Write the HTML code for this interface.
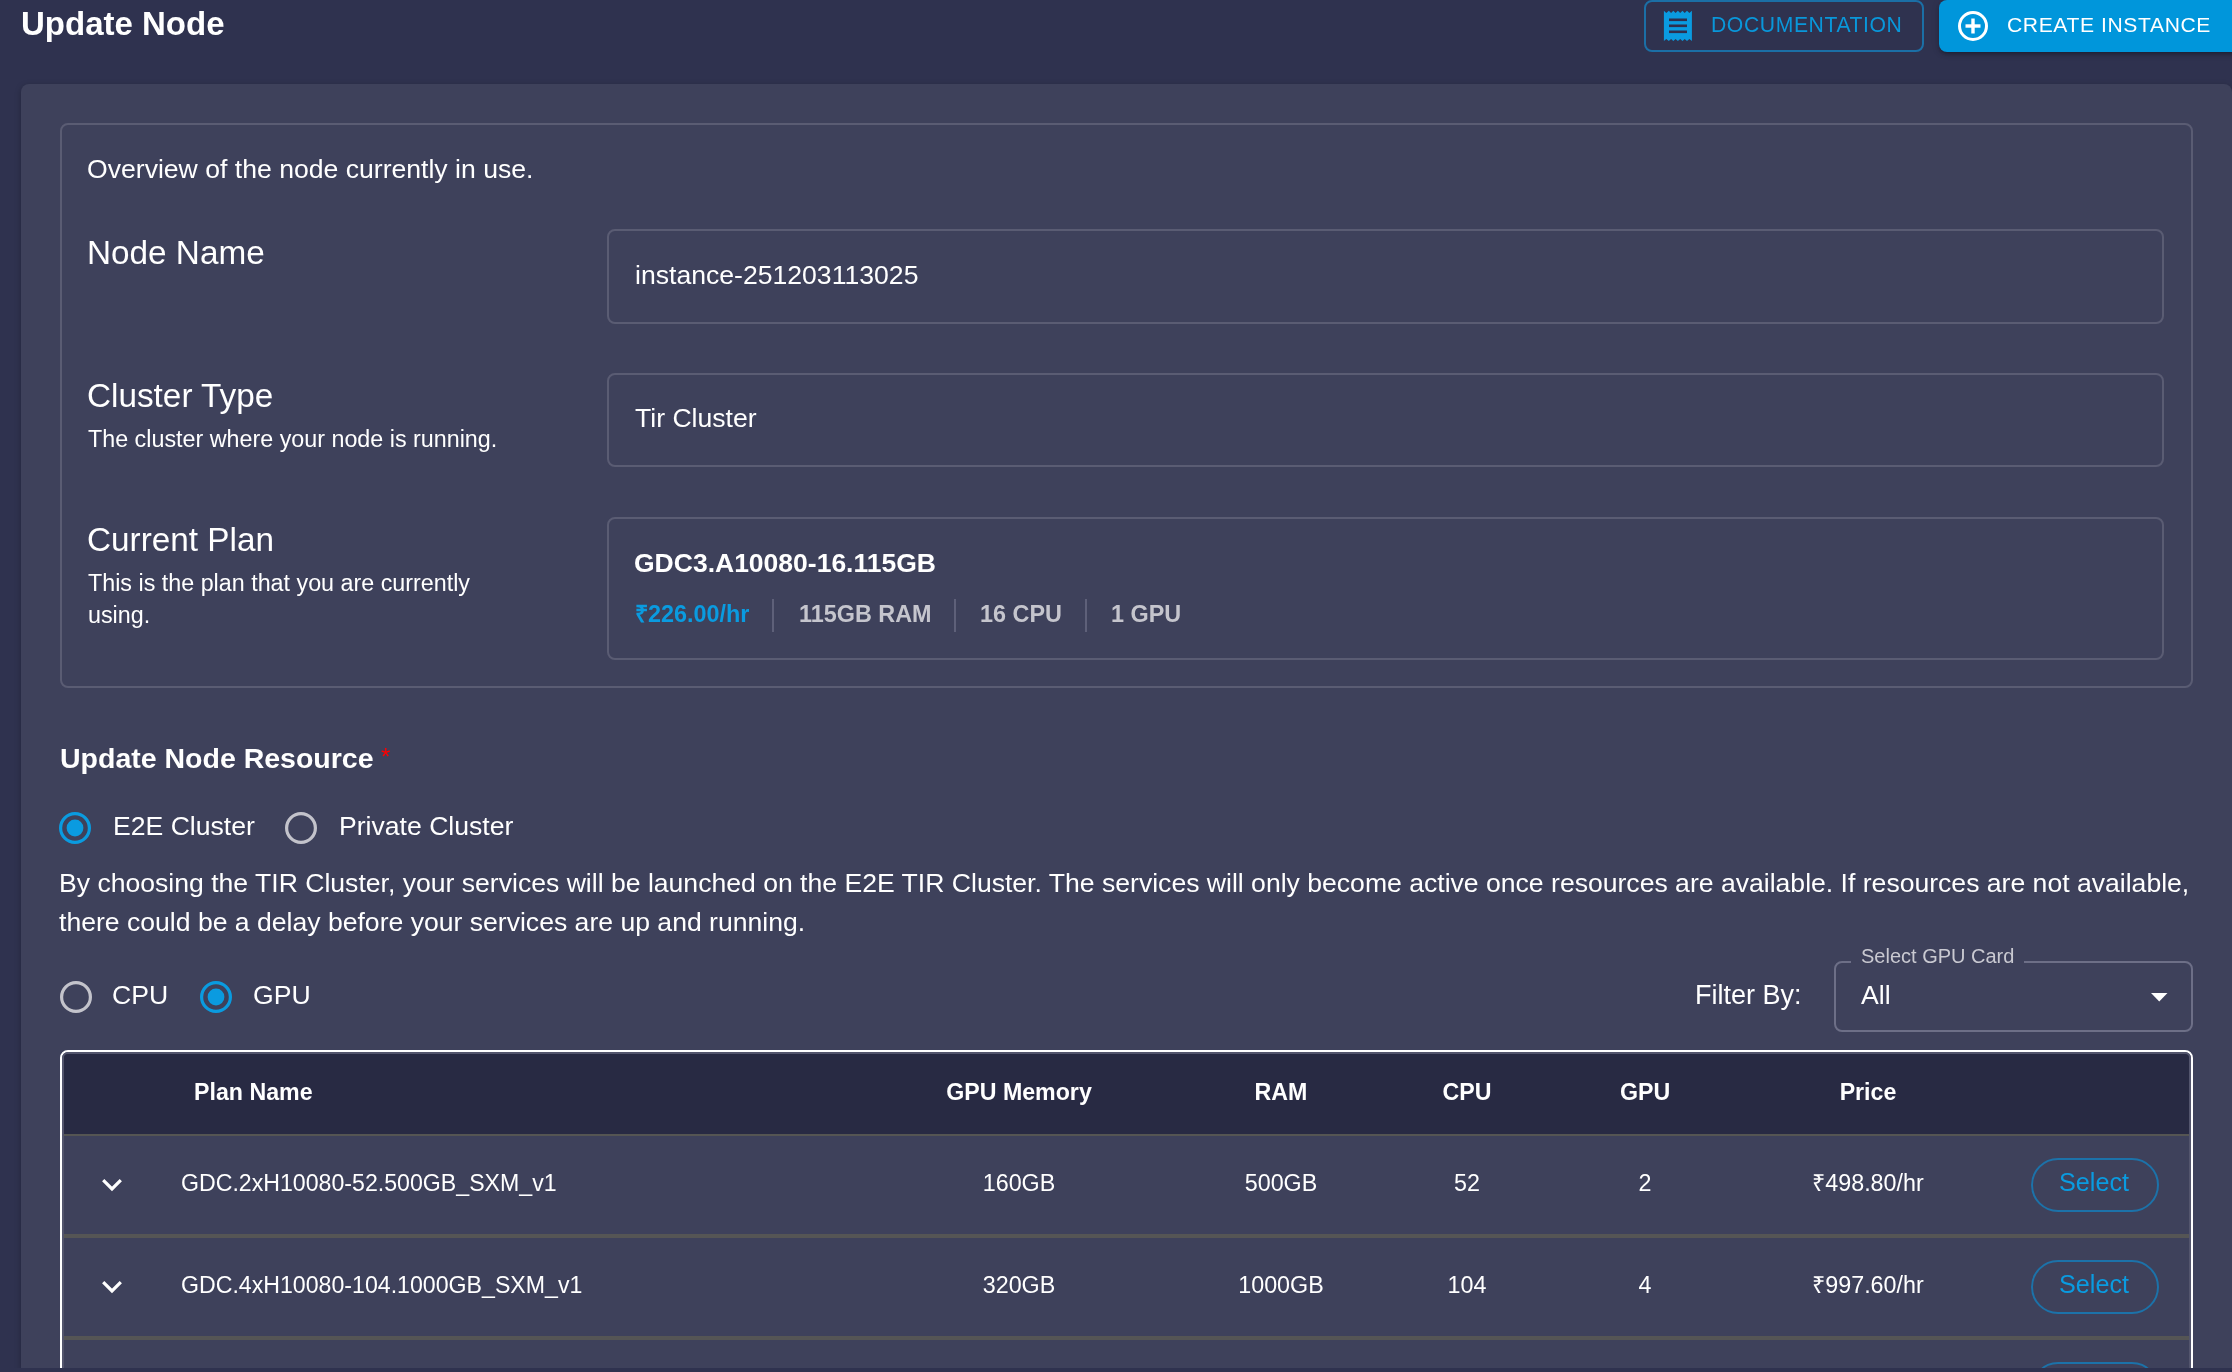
<!DOCTYPE html>
<html><head><meta charset="utf-8"><style>
html,body{margin:0;padding:0;}
body{width:2232px;height:1372px;overflow:hidden;position:relative;background:#2f324f;font-family:"Liberation Sans",sans-serif;color:#fff;}
.t{position:absolute;white-space:nowrap;will-change:transform;}
</style></head><body>
<div class="t" style="left:21.00px;top:6.13px;font-size:33px;line-height:36.86px;font-weight:700;">Update Node</div>
<div style="position:absolute;left:1644px;top:0px;width:280px;height:52px;box-sizing:border-box;border:2px solid #1b6fa6;border-radius:8px;"></div>
<svg style="position:absolute;left:1663px;top:10px" width="30" height="32" viewBox="0 0 30 32">
<path d="M0.9 0.75 L3.3 2.9 L5.8 0.75 L8.1 2.9 L10.3 0.75 L12.6 2.9 L14.9 0.75 L17.2 2.9 L19.5 0.75 L21.7 2.9 L24.0 0.75 L26.4 2.9 L28.9 0.75 L28.9 31.1 L26.4 29 L24.0 31.1 L21.7 29 L19.5 31.1 L17.2 29 L14.9 31.1 L12.6 29 L10.3 31.1 L8.1 29 L5.8 31.1 L3.3 29 L0.9 31.1 Z" fill="#0a9be0"/>
<rect x="6" y="8.5" width="18" height="2.6" fill="#302f4d"/>
<rect x="6" y="14.5" width="18" height="2.6" fill="#302f4d"/>
<rect x="6" y="20.5" width="18" height="2.6" fill="#302f4d"/>
</svg>
<div class="t" style="left:1711.00px;top:13.16px;font-size:21.15px;line-height:23.62px;color:#0997da;letter-spacing:0.02857em;">DOCUMENTATION</div>
<div style="position:absolute;left:1939px;top:0px;width:303px;height:52px;box-sizing:border-box;background:#0096db;border-radius:8px;box-shadow:0 3px 3px -2px rgba(0,0,0,.2),0 3px 4px 0 rgba(0,0,0,.14),0 1px 8px 0 rgba(0,0,0,.12);"></div>
<svg style="position:absolute;left:1957px;top:10px" width="32" height="32" viewBox="0 0 32 32">
<circle cx="16" cy="16" r="13.5" fill="none" stroke="#fff" stroke-width="3"/>
<rect x="14.3" y="8.5" width="3.4" height="15" fill="#fff"/>
<rect x="8.5" y="14.3" width="15" height="3.4" fill="#fff"/>
</svg>
<div class="t" style="left:2006.50px;top:13.20px;font-size:21.1px;line-height:23.57px;letter-spacing:0.02857em;">CREATE INSTANCE</div>
<div style="position:absolute;left:21px;top:84px;width:2211px;height:1284px;box-sizing:border-box;background:#3e415b;border-radius:8px 8px 0 0;box-shadow:0 2px 6px rgba(0,0,0,.25);"></div>
<div style="position:absolute;left:60px;top:123px;width:2133px;height:565px;box-sizing:border-box;border:2px solid #5a5c73;border-radius:8px;"></div>
<div class="t" style="left:87.00px;top:154.93px;font-size:26.6px;line-height:29.71px;">Overview of the node currently in use.</div>
<div class="t" style="left:87.00px;top:234.36px;font-size:33.3px;line-height:37.20px;">Node Name</div>
<div style="position:absolute;left:607px;top:229px;width:1557px;height:95px;box-sizing:border-box;border:2px solid #5a5c73;border-radius:8px;"></div>
<div class="t" style="left:634.50px;top:260.93px;font-size:26.6px;line-height:29.71px;">instance-251203113025</div>
<div class="t" style="left:86.50px;top:376.86px;font-size:33.3px;line-height:37.20px;">Cluster Type</div>
<div class="t" style="left:87.80px;top:425.81px;font-size:23.3px;line-height:26.03px;">The cluster where your node is running.</div>
<div style="position:absolute;left:607px;top:372.5px;width:1557px;height:94.5px;box-sizing:border-box;border:2px solid #5a5c73;border-radius:8px;"></div>
<div class="t" style="left:635.00px;top:403.93px;font-size:26.6px;line-height:29.71px;">Tir Cluster</div>
<div class="t" style="left:86.50px;top:520.86px;font-size:33.3px;line-height:37.20px;">Current Plan</div>
<div class="t" style="left:87.80px;top:569.71px;font-size:23.3px;line-height:26.03px;">This is the plan that you are currently</div>
<div class="t" style="left:87.80px;top:601.71px;font-size:23.3px;line-height:26.03px;">using.</div>
<div style="position:absolute;left:607px;top:516.5px;width:1557px;height:143.5px;box-sizing:border-box;border:2px solid #5a5c73;border-radius:8px;"></div>
<div class="t" style="left:634.00px;top:548.52px;font-size:26.5px;line-height:29.60px;font-weight:700;">GDC3.A10080-16.115GB</div>
<div class="t" style="left:634.50px;top:601.12px;font-size:23.4px;line-height:26.14px;font-weight:700;color:#0a9be0;">₹226.00/hr</div>
<div style="position:absolute;left:772px;top:599px;width:2px;height:33px;box-sizing:border-box;background:#5e6079;"></div>
<div class="t" style="left:799.00px;top:601.12px;font-size:23.4px;line-height:26.14px;font-weight:700;color:#c5c5cd;">115GB RAM</div>
<div style="position:absolute;left:954px;top:599px;width:2px;height:33px;box-sizing:border-box;background:#5e6079;"></div>
<div class="t" style="left:979.50px;top:601.12px;font-size:23.4px;line-height:26.14px;font-weight:700;color:#c5c5cd;">16 CPU</div>
<div style="position:absolute;left:1085px;top:599px;width:2px;height:33px;box-sizing:border-box;background:#5e6079;"></div>
<div class="t" style="left:1111.00px;top:601.12px;font-size:23.4px;line-height:26.14px;font-weight:700;color:#c5c5cd;">1 GPU</div>
<div class="t" style="left:60.00px;top:742.81px;font-size:28.5px;line-height:31.83px;font-weight:700;">Update Node Resource</div>
<div class="t" style="left:380.50px;top:744.28px;font-size:24px;line-height:26.81px;color:#f00;">*</div>
<svg style="position:absolute;left:58.3px;top:810.6px" width="34" height="34"><circle cx="17" cy="17" r="14.4" fill="none" stroke="#0a9be0" stroke-width="3.2"/><circle cx="17" cy="17" r="8.4" fill="#0a9be0"/></svg>
<div class="t" style="left:113.00px;top:811.93px;font-size:26.6px;line-height:29.71px;">E2E Cluster</div>
<svg style="position:absolute;left:284.4px;top:810.6px" width="34" height="34"><circle cx="17" cy="17" r="14.4" fill="none" stroke="#c3c3cb" stroke-width="3.2"/></svg>
<div class="t" style="left:339.00px;top:811.93px;font-size:26.6px;line-height:29.71px;">Private Cluster</div>
<div class="t" style="left:59.00px;top:868.95px;font-size:26.58px;line-height:29.69px;">By choosing the TIR Cluster, your services will be launched on the E2E TIR Cluster. The services will only become active once resources are available. If resources are not available,</div>
<div class="t" style="left:59.00px;top:907.95px;font-size:26.58px;line-height:29.69px;">there could be a delay before your services are up and running.</div>
<svg style="position:absolute;left:58.5px;top:979.5px" width="34" height="34"><circle cx="17" cy="17" r="14.4" fill="none" stroke="#c3c3cb" stroke-width="3.2"/></svg>
<div class="t" style="left:112.00px;top:980.73px;font-size:26.6px;line-height:29.71px;">CPU</div>
<svg style="position:absolute;left:198.5px;top:979.5px" width="34" height="34"><circle cx="17" cy="17" r="14.4" fill="none" stroke="#0a9be0" stroke-width="3.2"/><circle cx="17" cy="17" r="8.4" fill="#0a9be0"/></svg>
<div class="t" style="left:252.50px;top:980.73px;font-size:26.6px;line-height:29.71px;">GPU</div>
<div class="t" style="left:1695.00px;top:980.37px;font-size:27px;line-height:30.16px;">Filter By:</div>
<div style="position:absolute;left:1833.5px;top:961px;width:359.5px;height:71px;box-sizing:border-box;border:2px solid #6d6f87;border-radius:8px;"></div>
<div style="position:absolute;left:1851px;top:955px;width:173px;height:11px;box-sizing:border-box;background:#3e415b;"></div>
<div class="t" style="left:1861.00px;top:945.00px;font-size:20px;line-height:22.34px;color:#c9c9d1;">Select GPU Card</div>
<div class="t" style="left:1860.50px;top:980.73px;font-size:26.6px;line-height:29.71px;">All</div>
<svg style="position:absolute;left:2151px;top:993px" width="17" height="9"><path d="M0 0 L16.5 0 L8.25 8.5 Z" fill="#fff"/></svg>
<div style="position:absolute;left:60px;top:1050px;width:2133px;height:350px;box-sizing:border-box;border:2px solid #fff;border-radius:8px;"></div>
<div style="position:absolute;left:62px;top:1052px;width:2129px;height:348px;box-sizing:border-box;border:2px solid #53556d;border-radius:6px;"></div>
<div style="position:absolute;left:64px;top:1054px;width:2125px;height:80px;box-sizing:border-box;background:#282a43;border-radius:4px 4px 0 0;"></div>
<div style="position:absolute;left:64px;top:1134px;width:2125px;height:2px;box-sizing:border-box;background:#555553;"></div>
<div class="t" style="left:193.50px;top:1080.00px;font-size:23.2px;line-height:25.91px;font-weight:700;">Plan Name</div>
<div class="t" style="left:868.80px;top:1080.20px;font-size:23.2px;line-height:25.91px;font-weight:700;width:300px;text-align:center;">GPU Memory</div>
<div class="t" style="left:1131.00px;top:1080.20px;font-size:23.2px;line-height:25.91px;font-weight:700;width:300px;text-align:center;">RAM</div>
<div class="t" style="left:1317.00px;top:1080.20px;font-size:23.2px;line-height:25.91px;font-weight:700;width:300px;text-align:center;">CPU</div>
<div class="t" style="left:1495.00px;top:1080.20px;font-size:23.2px;line-height:25.91px;font-weight:700;width:300px;text-align:center;">GPU</div>
<div class="t" style="left:1718.00px;top:1080.20px;font-size:23.2px;line-height:25.91px;font-weight:700;width:300px;text-align:center;">Price</div>
<div style="position:absolute;left:64px;top:1234px;width:2125px;height:4px;box-sizing:border-box;background:#555555;"></div>
<svg style="position:absolute;left:101px;top:1178px" width="22" height="14"><path d="M2.2 2.2 L11 11 L19.8 2.2" fill="none" stroke="#fff" stroke-width="3.2"/></svg>
<div class="t" style="left:181.30px;top:1171.35px;font-size:23.15px;line-height:25.86px;">GDC.2xH10080-52.500GB_SXM_v1</div>
<div class="t" style="left:868.80px;top:1170.21px;font-size:23.3px;line-height:26.03px;width:300px;text-align:center;">160GB</div>
<div class="t" style="left:1131.00px;top:1170.21px;font-size:23.3px;line-height:26.03px;width:300px;text-align:center;">500GB</div>
<div class="t" style="left:1317.00px;top:1170.21px;font-size:23.3px;line-height:26.03px;width:300px;text-align:center;">52</div>
<div class="t" style="left:1495.00px;top:1170.21px;font-size:23.3px;line-height:26.03px;width:300px;text-align:center;">2</div>
<div class="t" style="left:1718.00px;top:1170.21px;font-size:23.3px;line-height:26.03px;width:300px;text-align:center;">₹498.80/hr</div>
<div style="position:absolute;left:2031px;top:1158px;width:128px;height:53.5px;box-sizing:border-box;border:2px solid #1c72a9;border-radius:27px;"></div>
<div class="t" style="left:1993.80px;top:1168.49px;font-size:25.2px;line-height:28.15px;color:#0a9be0;width:200px;text-align:center;">Select</div>
<div style="position:absolute;left:64px;top:1336px;width:2125px;height:4px;box-sizing:border-box;background:#555555;"></div>
<svg style="position:absolute;left:101px;top:1280px" width="22" height="14"><path d="M2.2 2.2 L11 11 L19.8 2.2" fill="none" stroke="#fff" stroke-width="3.2"/></svg>
<div class="t" style="left:181.30px;top:1273.35px;font-size:23.15px;line-height:25.86px;">GDC.4xH10080-104.1000GB_SXM_v1</div>
<div class="t" style="left:868.80px;top:1272.21px;font-size:23.3px;line-height:26.03px;width:300px;text-align:center;">320GB</div>
<div class="t" style="left:1131.00px;top:1272.21px;font-size:23.3px;line-height:26.03px;width:300px;text-align:center;">1000GB</div>
<div class="t" style="left:1317.00px;top:1272.21px;font-size:23.3px;line-height:26.03px;width:300px;text-align:center;">104</div>
<div class="t" style="left:1495.00px;top:1272.21px;font-size:23.3px;line-height:26.03px;width:300px;text-align:center;">4</div>
<div class="t" style="left:1718.00px;top:1272.21px;font-size:23.3px;line-height:26.03px;width:300px;text-align:center;">₹997.60/hr</div>
<div style="position:absolute;left:2031px;top:1260px;width:128px;height:53.5px;box-sizing:border-box;border:2px solid #1c72a9;border-radius:27px;"></div>
<div class="t" style="left:1993.80px;top:1270.49px;font-size:25.2px;line-height:28.15px;color:#0a9be0;width:200px;text-align:center;">Select</div>
<div style="position:absolute;left:2031px;top:1362px;width:128px;height:53.5px;box-sizing:border-box;border:2px solid #1c72a9;border-radius:27px;"></div>
<div style="position:absolute;left:0px;top:1368px;width:2232px;height:4px;box-sizing:border-box;background:#2f324f;"></div>
</body></html>
